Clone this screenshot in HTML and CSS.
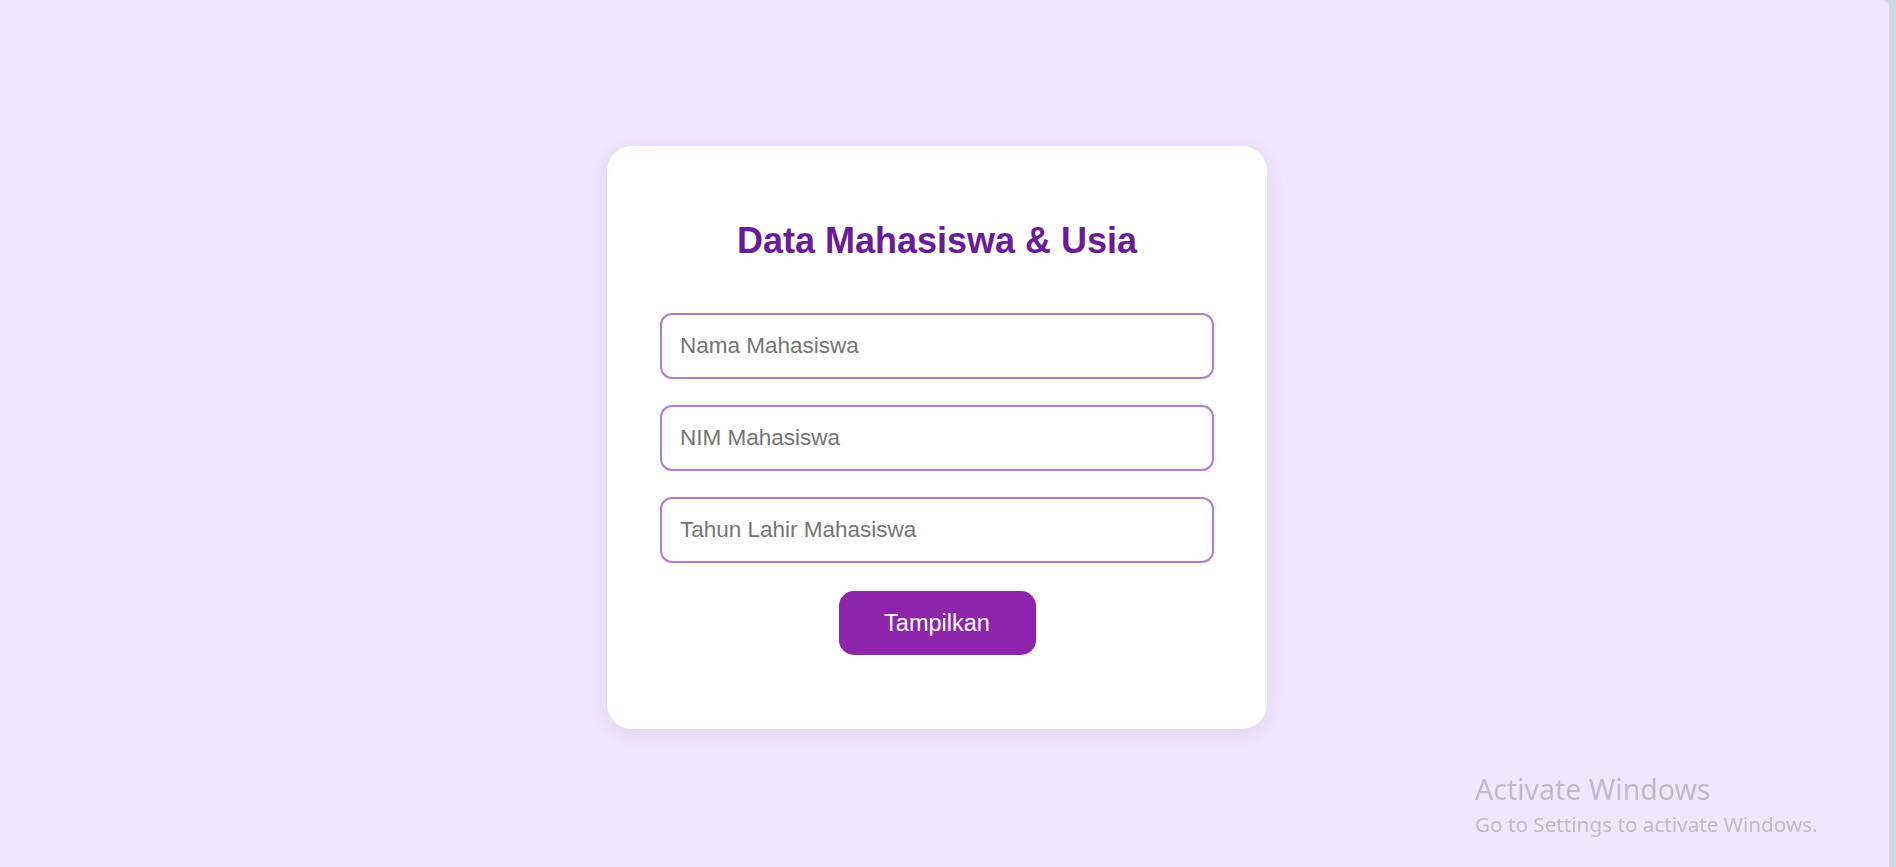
FILE: index.html
```html
<!DOCTYPE html>
<html lang="id">
<head>
    <meta charset="UTF-8">
    <meta name="viewport" content="width=device-width, initial-scale=1.0">
    <title>Data Mahasiswa &amp; Usia</title>
    <link rel="stylesheet" href="styles.css">
</head>
<body>
    <div class="page">
        <div class="card">
            <h1>Data Mahasiswa &amp; Usia</h1>
            <form class="form" onsubmit="return false;">
                <input type="text" id="nama" placeholder="Nama Mahasiswa">
                <input type="text" id="nim" placeholder="NIM Mahasiswa">
                <input type="number" id="tahun" placeholder="Tahun Lahir Mahasiswa">
                <button type="submit">Tampilkan</button>
            </form>
        </div>
    </div>
    <div class="watermark">
        <div class="wm-title">Activate Windows</div>
        <div class="wm-sub">Go to Settings to activate Windows.</div>
    </div>
</body>
</html>
```

FILE: styles.css
```css
html, body {
    margin: 0;
    height: 100%;
}
body {
    font-family: "Liberation Sans", Arial, sans-serif;
    background-color: #c6dde1;
    display: flex;
    overflow: hidden;
}
.page {
    flex: 1;
    margin-right: 6px;
    background-color: #f1e7fd;
    border-right: 1px solid #d2d9e6;
    border-top-right-radius: 8px;
    display: flex;
    justify-content: center;
    align-items: center;
    padding: 8px 15px 0 0;
}
.card {
    width: 660px;
    box-sizing: border-box;
    padding: 0 53px 74px;
    background: #ffffff;
    border-radius: 25px;
    box-shadow: 0 4px 22px rgba(120, 60, 170, 0.13);
}
h1 {
    margin: 75px 0 52px;
    font-size: 36px;
    line-height: 40px;
    font-weight: bold;
    text-align: center;
    color: #6a1b9a;
}
.form {
    display: flex;
    flex-direction: column;
    gap: 26px;
}
input {
    display: block;
    width: 100%;
    height: 66px;
    box-sizing: border-box;
    padding: 0 18px;
    border: 2px solid #b57cd2;
    border-radius: 12px;
    font-family: "Liberation Sans", Arial, sans-serif;
    font-size: 22.5px;
    color: #333;
    outline: none;
    -moz-appearance: textfield;
}
input::-webkit-outer-spin-button,
input::-webkit-inner-spin-button {
    -webkit-appearance: none;
    margin: 0;
}
input::placeholder {
    color: #757575;
}
button {
    align-self: center;
    margin-top: 2px;
    width: 197px;
    height: 64px;
    border: none;
    border-radius: 15px;
    background-color: #8e24aa;
    color: #ffffff;
    font-family: "Liberation Sans", Arial, sans-serif;
    font-size: 23.5px;
    cursor: pointer;
}
button:hover {
    background-color: #7b1fa2;
}
.watermark {
    position: fixed;
    left: 1475px;
    top: 773px;
    font-family: "Noto Sans", "Open Sans", sans-serif;
    color: #c2b9cc;
    pointer-events: none;
}
.wm-title {
    font-size: 28.5px;
    line-height: 32px;
}
.wm-sub {
    font-size: 20.7px;
    line-height: 32px;
    margin-top: 3px;
}
```
